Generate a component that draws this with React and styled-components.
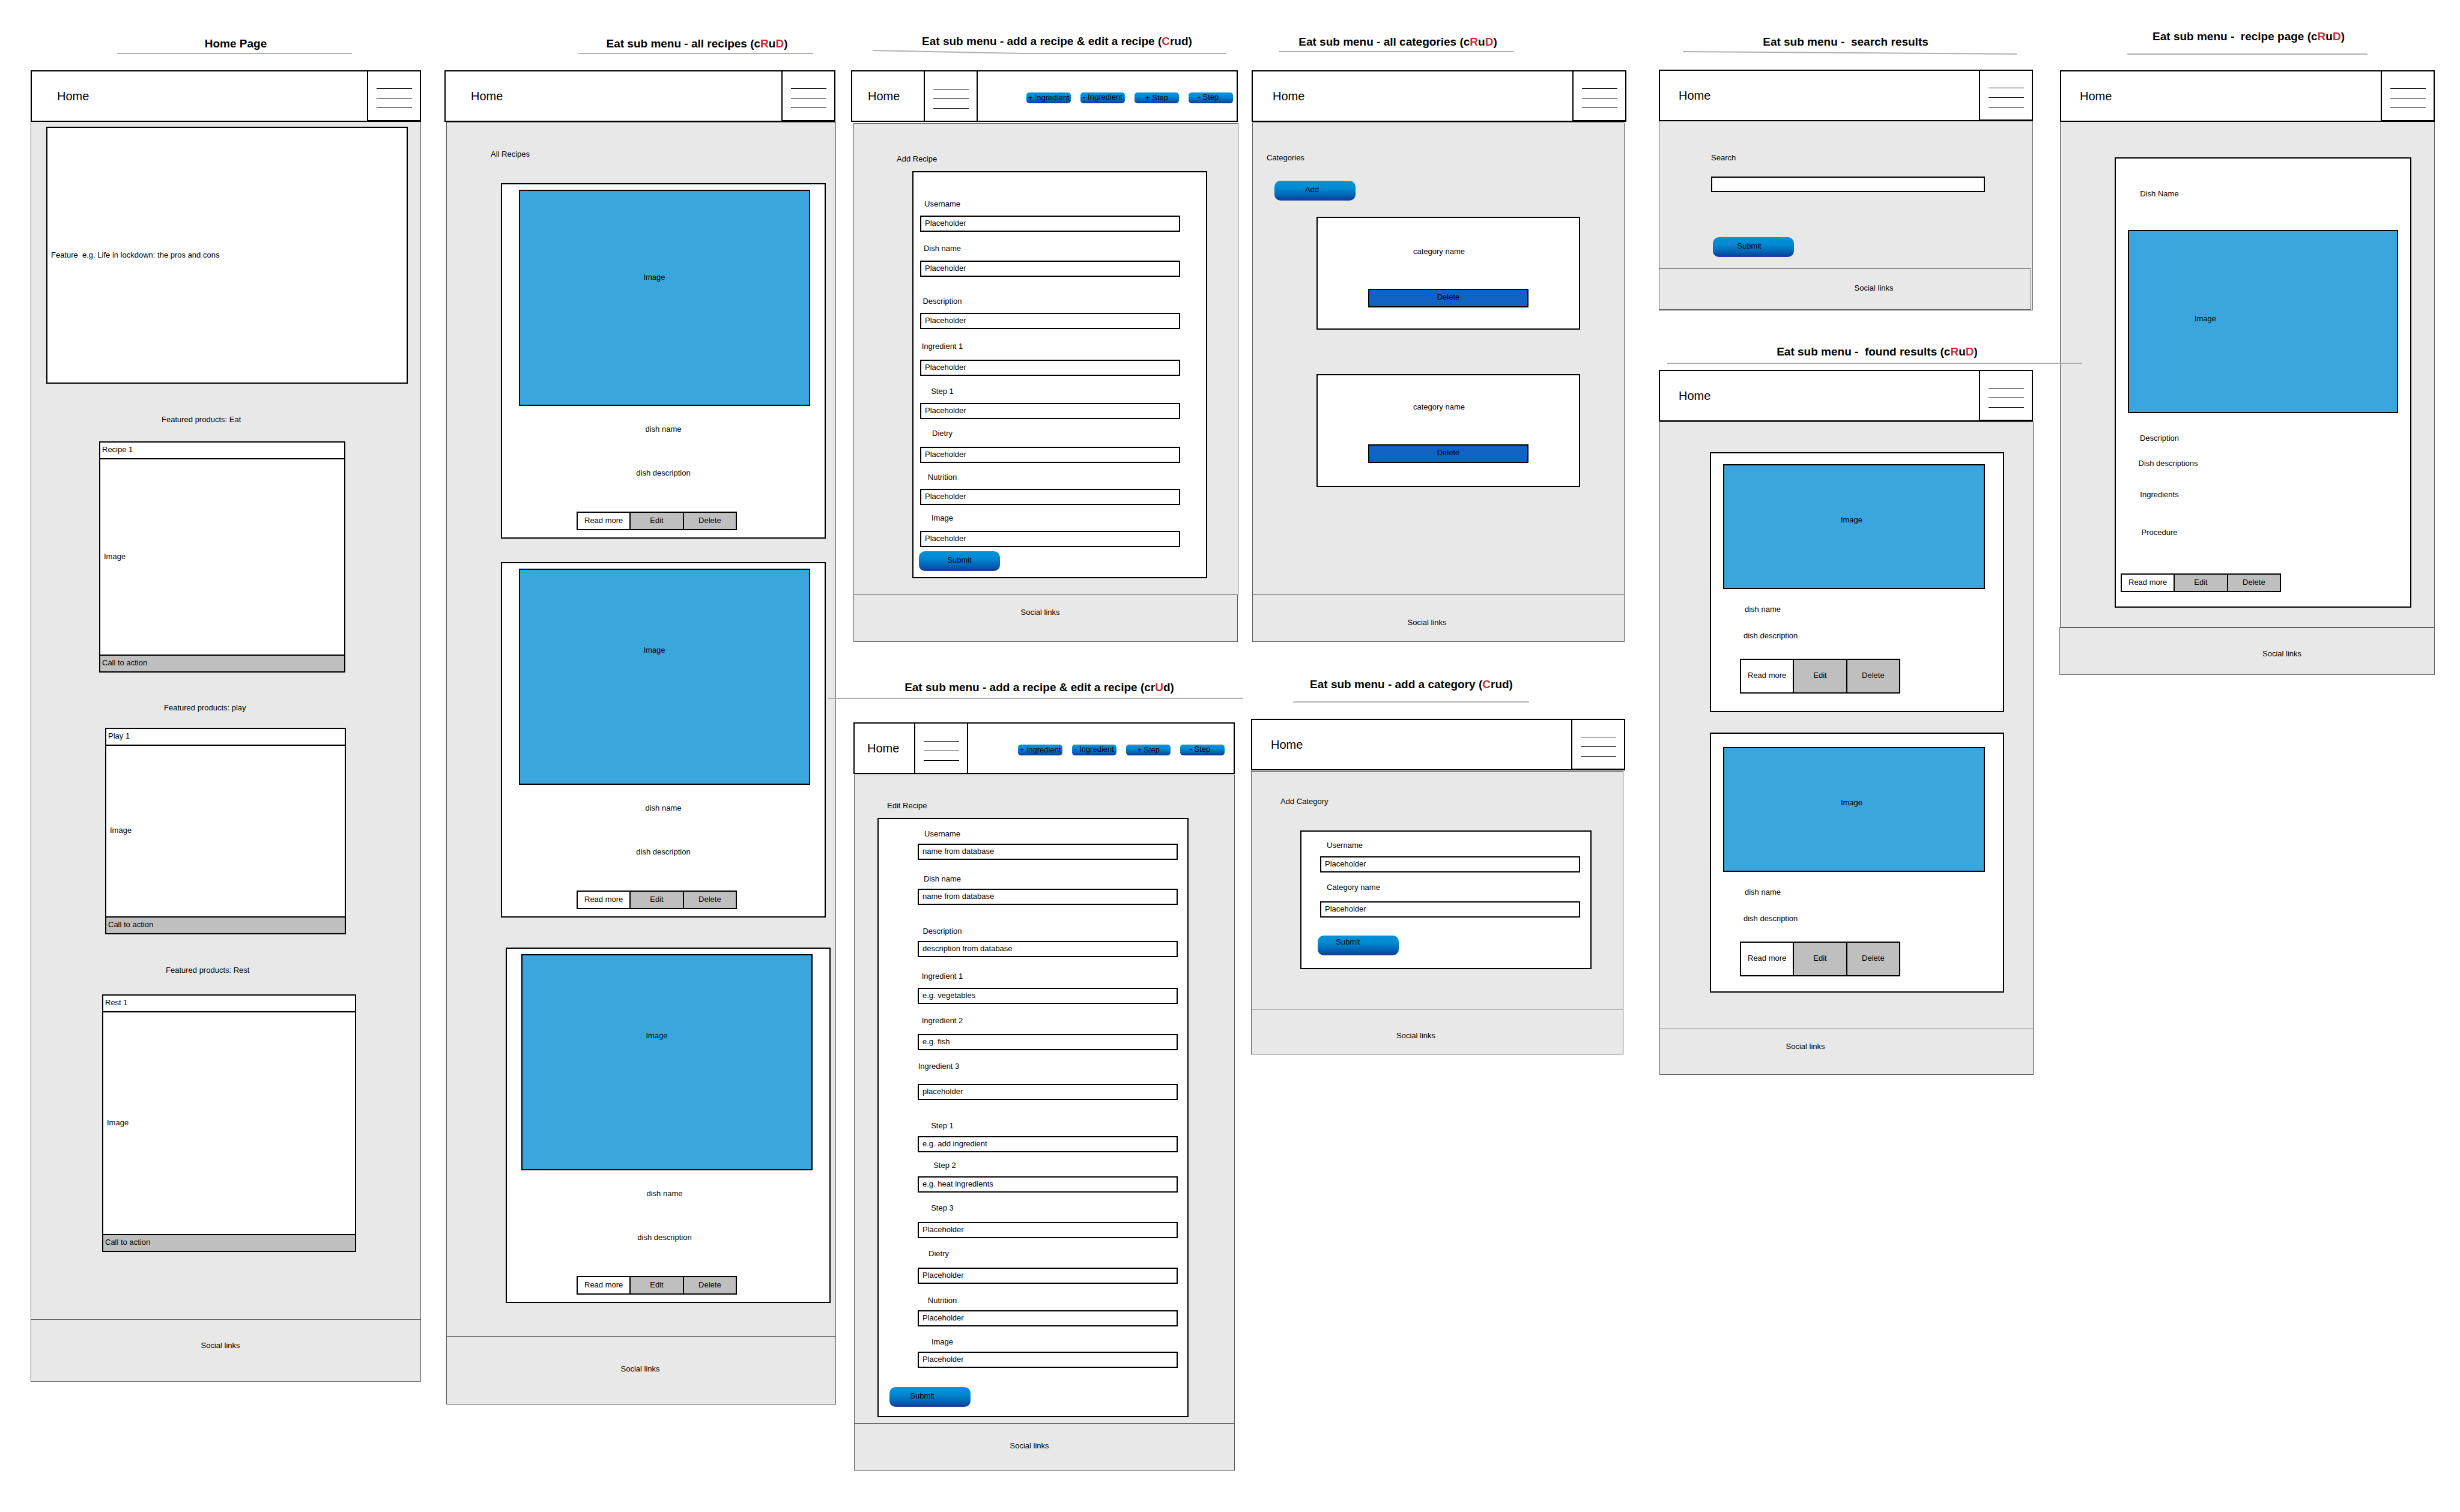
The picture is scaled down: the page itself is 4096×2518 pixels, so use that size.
import React, { useId } from 'react';
import styled, { createGlobalStyle, css } from 'styled-components';

const ink = '#000000';
const hairline = '#5e5e5e';
const panel = '#e8e8e8';
const photo = '#3ba5de';
const muted = '#bfbfbf';
const accent = '#c92c38';

const GlobalStyle = createGlobalStyle`
  *, *::before, *::after { box-sizing: border-box; }
  body {
    margin: 0;
    background: #ffffff;
    color: ${ink};
    font-family: "Liberation Sans", Arial, Helvetica, sans-serif;
    font-size: 13px;
    line-height: 16px;
  }
  button, input { font: inherit; color: inherit; margin: 0; }
`;

/* Outer spacing shared by every block that sits in a column. */
const spacing = css`
  margin-top: ${(p) => p.$mt || 0}px;
  margin-left: ${(p) => p.$ml || 0}px;
  margin-right: ${(p) => p.$mr || 0}px;
`;

const Board = styled.main`
  display: grid;
  grid-template-columns:
    51fr minmax(0, 650fr) 39fr minmax(0, 652fr) 25fr minmax(0, 645fr) 21fr
    minmax(0, 626fr) 53fr minmax(0, 624fr) 44fr minmax(0, 624fr) 42fr;
  align-items: start;
  padding-bottom: 60px;
`;

const Column = styled.div`
  grid-column: ${(p) => p.$track * 2};
  display: flex;
  flex-direction: column;
  padding-top: ${(p) => p.$pt}px;
`;

const Artboard = styled.section`
  display: flex;
  flex-direction: column;
  margin-top: ${(p) => p.$mt || 0}px;
`;

const Title = styled.h2`
  margin: 0;
  padding-left: ${(p) => p.$pl || 0}px;
  padding-right: ${(p) => p.$pr || 0}px;
  font-size: 19px;
  line-height: 24px;
  font-weight: 700;
  text-align: center;
  white-space: pre;
`;

const Hot = styled.span`
  color: ${accent};
`;

const Rule = styled.hr`
  ${spacing}
  position: relative;
  z-index: 1;
  height: 0;
  margin-bottom: 0;
  border: 0;
  border-top: 2px solid #b0b0b0;
`;

const SlopedFrame = styled.div`
  ${spacing}
  height: 8px;
  svg { display: block; width: 100%; height: 100%; overflow: visible; }
`;

const Header = styled.header`
  ${spacing}
  display: flex;
  align-items: stretch;
  height: 86px;
  border: 2px solid ${ink};
  background: #ffffff;
`;

const HomeLink = styled.a`
  display: flex;
  align-items: center;
  flex: ${(p) => (p.$width ? `0 0 ${p.$width}px` : '1 1 auto')};
  padding-left: ${(p) => p.$pl}px;
  color: inherit;
  font-size: 20px;
  line-height: 24px;
  text-decoration: none;
`;

const MenuButton = styled.button`
  display: flex;
  flex: 0 0 ${(p) => (p.$boxed ? 90 : 88)}px;
  flex-direction: column;
  align-items: center;
  justify-content: center;
  gap: 15px;
  padding: 8px 0 0;
  border: 0 solid ${ink};
  border-left-width: 2px;
  border-right-width: ${(p) => (p.$boxed ? 2 : 0)}px;
  border-bottom-width: ${(p) => (p.$boxed ? 0 : 1)}px;
  background: transparent;
`;

const Bar = styled.span`
  width: 59px;
  height: 1px;
  background: #000000;
`;

const Toolbar = styled.div`
  display: flex;
  flex: 1 1 auto;
  align-items: center;
  justify-content: flex-end;
  gap: 16px;
  padding: 6px ${(p) => p.$pr}px 0 0;
`;

const GlossyButton = styled.button`
  ${spacing}
  flex: none;
  align-self: ${(p) => (p.$small ? 'center' : 'flex-start')};
  width: ${(p) => (p.$small ? 74 : 135)}px;
  height: ${(p) => (p.$small ? 18 : 33)}px;
  padding: 0 ${(p) => p.$pr || 0}px ${(p) => p.$pb || 0}px 0;
  border: 0;
  border-radius: ${(p) => (p.$small ? 5 : 10)}px;
  background: linear-gradient(#0093db 0%, #008ad2 35%, #0065b4 72%, #0a479f 92%, #2c3c98 100%);
  line-height: 16px;
  white-space: nowrap;
`;

const Body = styled.div`
  ${spacing}
  display: flex;
  flex-direction: column;
  padding-bottom: ${(p) => p.$pb || 0}px;
  border: 1px solid ${hairline};
  border-top-width: ${(p) => (p.$topLine ? 1 : 0)}px;
  border-bottom-width: ${(p) => (p.$bottomLine ? 1 : 0)}px;
  background: ${panel};
`;

const Footer = styled.footer`
  ${spacing}
  height: ${(p) => p.$height}px;
  padding: ${(p) => p.$pt}px ${(p) => p.$pr || 0}px 0 ${(p) => p.$pl || 0}px;
  border: 1px solid ${hairline};
  background: ${panel};
  text-align: center;
  a { color: inherit; text-decoration: none; }
`;

const Text = styled.p`
  margin: ${(p) => p.$mt || 0}px 0 0;
  padding-left: ${(p) => p.$pl || 0}px;
  padding-right: ${(p) => p.$pr || 0}px;
  width: ${(p) => (p.$width ? `${p.$width}px` : 'auto')};
  text-align: ${(p) => (p.$center ? 'center' : 'left')};
  white-space: pre;
`;

const Card = styled.article`
  ${spacing}
  display: flex;
  flex-direction: column;
  height: ${(p) => (p.$height ? `${p.$height}px` : 'auto')};
  padding-bottom: ${(p) => p.$pb || 0}px;
  border: 2px solid ${ink};
  background: #ffffff;
`;

const Form = styled(Card).attrs({ as: 'form' })``;

const FeatureBox = styled(Card)`
  justify-content: center;
`;

const CardStrip = styled.div`
  height: 28px;
  padding: 4px 3px 0;
  border: 0 solid ${ink};
  border-bottom-width: 2px;
`;

const CardFrame = styled.div`
  display: flex;
  align-items: center;
  height: ${(p) => p.$height}px;
  padding: 0 6px 2px;
`;

const CallToAction = styled.button`
  display: block;
  height: 28px;
  padding: 2px 3px 4px;
  border: 0;
  border-top: 2px solid ${ink};
  background: ${muted};
  text-align: left;
`;

const Photo = styled.div`
  ${spacing}
  height: ${(p) => p.$height}px;
  padding: ${(p) => p.$pt}px ${(p) => p.$pr || 0}px 0 0;
  border: 2px solid ${ink};
  background: ${photo};
  text-align: center;
`;

const ButtonGroup = styled.div`
  ${spacing}
  display: flex;
  width: 267px;
  height: ${(p) => (p.$tall ? 58 : 31)}px;
  border: 2px solid ${ink};
`;

const GroupButton = styled.button`
  flex: 1 1 0;
  padding: 0 0 2px;
  border: 0 solid ${ink};
  border-left-width: ${(p) => (p.$first ? 0 : 2)}px;
  background: ${(p) => (p.$first ? '#ffffff' : muted)};
  white-space: nowrap;
`;

const DeleteButton = styled.button`
  ${spacing}
  height: 31px;
  padding: 0 0 3px;
  border: 2px solid ${ink};
  background: #1063c2;
`;

const FieldBox = styled.div`
  ${spacing}
  display: flex;
  flex-direction: column;
  align-items: flex-start;
  gap: ${(p) => p.$gap}px;
`;

const Label = styled.label`
  width: ${(p) => (p.$width ? `${p.$width}px` : 'auto')};
  padding-left: ${(p) => p.$pl || 0}px;
  text-align: center;
  white-space: nowrap;
`;

const Input = styled.input`
  width: 100%;
  height: ${(p) => p.$height || 27}px;
  padding: 0 6px 2px;
  border: 2px solid ${ink};
  border-radius: 0;
  background: #ffffff;
  outline: none;
  &::placeholder { color: ${ink}; opacity: 1; }
`;

function PageHeader({ pl = 33, ...box }) {
  return (
    <Header {...box}>
      <HomeLink href="#home" $pl={pl}>Home</HomeLink>
      <Menu />
    </Header>
  );
}

function Menu({ boxed }) {
  return (
    <MenuButton type="button" aria-label="Menu" $boxed={boxed}>
      <Bar /><Bar /><Bar />
    </MenuButton>
  );
}

function EditorHeader({ homeWidth, pl, toolbarPad, ...box }) {
  return (
    <Header {...box}>
      <HomeLink href="#home" $width={homeWidth} $pl={pl}>Home</HomeLink>
      <Menu boxed />
      <Toolbar $pr={toolbarPad}>
        <GlossyButton type="button" $small>+ Ingredient</GlossyButton>
        <GlossyButton type="button" $small $pb={2}>- Ingredient</GlossyButton>
        <GlossyButton type="button" $small>+ Step</GlossyButton>
        <GlossyButton type="button" $small $pb={2} $pr={8}>- Step</GlossyButton>
      </Toolbar>
    </Header>
  );
}

function SocialFooter(props) {
  return (
    <Footer {...props}>
      <a href="#social">Social links</a>
    </Footer>
  );
}

function SlopedRule({ points, ...box }) {
  return (
    <SlopedFrame {...box}>
      <svg viewBox="0 0 100 8" preserveAspectRatio="none" aria-hidden="true">
        <polyline points={points} fill="none" stroke="#b0b0b0" strokeWidth="2" vectorEffect="non-scaling-stroke" />
      </svg>
    </SlopedFrame>
  );
}

function CrudRD() {
  return <>(c<Hot>R</Hot>u<Hot>D</Hot>)</>;
}

function Field({ label, gap, width, labelPad, value, placeholder, height, ...box }) {
  const id = useId();
  return (
    <FieldBox {...box} $gap={gap}>
      <Label htmlFor={id} $width={width} $pl={labelPad}>{label}</Label>
      <Input id={id} type="text" defaultValue={value} placeholder={placeholder} $height={height} />
    </FieldBox>
  );
}

function Actions(props) {
  return (
    <ButtonGroup {...props}>
      <GroupButton type="button" $first>Read more</GroupButton>
      <GroupButton type="button">Edit</GroupButton>
      <GroupButton type="button">Delete</GroupButton>
    </ButtonGroup>
  );
}

function ProductCard({ name, frame, ...box }) {
  return (
    <Card {...box}>
      <CardStrip>{name}</CardStrip>
      <CardFrame $height={frame}>Image</CardFrame>
      <CallToAction type="button">Call to action</CallToAction>
    </Card>
  );
}

function RecipeCard({ captionTop, actionsLeft, textPad, photoLeft = 28, photoRight = 24, ...box }) {
  return (
    <Card {...box} $pb={12}>
      <Photo $mt={9} $ml={photoLeft} $mr={photoRight} $height={360} $pt={captionTop} $pr={34}>Image</Photo>
      <Text $mt={31} $center $pr={textPad}>dish name</Text>
      <Text $mt={57} $center $pr={textPad}>dish description</Text>
      <Actions $mt={56} $ml={actionsLeft} />
    </Card>
  );
}

function ResultCard({ photoTop, ...box }) {
  return (
    <Card {...box} $height={433}>
      <Photo $mt={photoTop} $ml={20} $mr={30} $height={208} $pt={83} $pr={8}>Image</Photo>
      <Text $mt={26} $pl={56}>dish name</Text>
      <Text $mt={28} $pl={54}>dish description</Text>
      <Actions $mt={30} $ml={48} $tall />
    </Card>
  );
}

function CategoryCard({ top, ...box }) {
  return (
    <Card {...box} $height={188}>
      <Text $mt={top} $center $pr={31}>category name</Text>
      <DeleteButton type="button" $mt={54} $ml={84} $mr={84}>Delete</DeleteButton>
    </Card>
  );
}

const addFields = [
  { label: 'Username', $mt: 45, gap: 11 },
  { label: 'Dish name', $mt: 20, gap: 12 },
  { label: 'Description', $mt: 33, gap: 11 },
  { label: 'Ingredient 1', $mt: 21, gap: 14 },
  { label: 'Step 1', $mt: 18, gap: 11 },
  { label: 'Dietry', $mt: 16, gap: 14 },
  { label: 'Nutrition', $mt: 16, gap: 11 },
  { label: 'Image', $mt: 14, gap: 13 },
];

const editFields = [
  { label: 'Username', value: 'name from database', $mt: 17, gap: 8 },
  { label: 'Dish name', value: 'name from database', $mt: 24, gap: 8 },
  { label: 'Description', value: 'description from database', $mt: 36, gap: 8 },
  { label: 'Ingredient 1', placeholder: 'e.g. vegetables', $mt: 24, gap: 11 },
  { label: 'Ingredient 2', placeholder: 'e.g. fish', $mt: 20, gap: 14 },
  { label: 'Ingredient 3', placeholder: 'placeholder', $mt: 19, gap: 21, width: 70 },
  { label: 'Step 1', placeholder: 'e.g. add ingredient', $mt: 35, gap: 9 },
  { label: 'Step 2', placeholder: 'e.g. heat ingredients', $mt: 14, gap: 10, width: 90 },
  { label: 'Step 3', placeholder: 'Placeholder', $mt: 18, gap: 15 },
  { label: 'Dietry', placeholder: 'Placeholder', $mt: 18, gap: 15, width: 70 },
  { label: 'Nutrition', placeholder: 'Placeholder', $mt: 20, gap: 8 },
  { label: 'Image', placeholder: 'Placeholder', $mt: 18, gap: 8 },
];

export default function App() {
  return (
    <>
      <GlobalStyle />
      <Board>
        <Column $track={1} $pt={61}>
          <Artboard>
            <Title $pl={33}>Home Page</Title>
            <Rule $mt={3} $ml={144} $mr={115} />
            <PageHeader $mt={27} pl={42} />
            <Body $pb={112}>
              <FeatureBox $mt={8} $ml={25} $mr={21} $height={428}>
                <Text $pl={6}>{'Feature  e.g. Life in lockdown: the pros and cons'}</Text>
              </FeatureBox>
              <Text $mt={52} $pl={217}>Featured products: Eat</Text>
              <ProductCard name="Recipe 1" frame={325} $mt={28} $ml={113} $mr={125} />
              <Text $mt={51} $pl={221}>Featured products: play</Text>
              <ProductCard name="Play 1" frame={284} $mt={25} $ml={123} $mr={124} />
              <Text $mt={52} $pl={224}>Featured products: Rest</Text>
              <ProductCard name="Rest 1" frame={369} $mt={32} $ml={118} $mr={107} />
            </Body>
            <SocialFooter $height={104} $pt={35} $pr={18} />
          </Artboard>
        </Column>

        <Column $track={2} $pt={61}>
          <Artboard>
            <Title $pl={189}>Eat sub menu - all recipes <CrudRD /></Title>
            <Rule $mt={3} $ml={223} $mr={38} />
            <PageHeader $mt={27} $mr={1} pl={42} />
            <Body $ml={3} $topLine $pb={55}>
              <Text $mt={45} $pl={73}>All Recipes</Text>
              <RecipeCard $mt={40} $ml={90} $mr={16} captionTop={136} actionsLeft={124} />
              <RecipeCard $mt={39} $ml={90} $mr={16} captionTop={126} actionsLeft={124} />
              <RecipeCard $mt={50} $ml={98} $mr={8} captionTop={126} actionsLeft={116} textPad={12} photoLeft={24} photoRight={28} />
            </Body>
            <SocialFooter $ml={3} $height={114} $pt={46} $pr={3} />
          </Artboard>
        </Column>

        <Column $track={3} $pt={57}>
          <Artboard>
            <Title $pl={41}>Eat sub menu - add a recipe &amp; edit a recipe (<Hot>C</Hot>rud)</Title>
            <SlopedRule points="0,2 42,7 100,7" $mt={1} $ml={36} $mr={21} />
            <EditorHeader $mt={27} $mr={1} homeWidth={119} pl={26} toolbarPad={6} />
            <Body $mt={2} $ml={4} $topLine $pb={27}>
              <Text $mt={51} $pl={71}>Add Recipe</Text>
              <Form $mt={12} $ml={97} $mr={51} $pb={10}>
                {addFields.map((f) => (
                  <Field key={f.label} placeholder="Placeholder" width={74} $ml={11} $mr={43} {...f} />
                ))}
                <GlossyButton type="button" $mt={7} $ml={9} $pb={4}>Submit</GlossyButton>
              </Form>
            </Body>
            <SocialFooter $ml={4} $mr={1} $height={79} $pt={21} $pr={18} />
          </Artboard>
          <Artboard $mt={64}>
            <Title $pr={18}>Eat sub menu - add a recipe &amp; edit a recipe (cr<Hot>U</Hot>d)</Title>
            <Rule $mt={5} $ml={-38} $mr={-8} />
            <EditorHeader $mt={39} $ml={4} $mr={6} homeWidth={99} pl={21} toolbarPad={15} />
            <Body $mt={1} $ml={5} $mr={6} $topLine $pb={10}>
              <Text $mt={43} $pl={54}>Edit Recipe</Text>
              <Form $mt={12} $ml={38} $mr={76} $pb={15}>
                {editFields.map((f) => (
                  <Field key={f.label} width={82} $ml={65} $mr={16} {...f} />
                ))}
                <GlossyButton type="button" $mt={32} $ml={18} $pr={26} $pb={4}>Submit</GlossyButton>
              </Form>
            </Body>
            <SocialFooter $ml={5} $mr={6} $height={79} $pt={29} $pr={50} />
          </Artboard>
        </Column>

        <Column $track={4} $pt={58}>
          <Artboard>
            <Title $pr={137}>Eat sub menu - all categories <CrudRD /></Title>
            <Rule $mt={3} $ml={46} $mr={189} />
            <PageHeader $mt={30} $ml={1} $mr={1} />
            <Body $mt={1} $ml={2} $mr={4} $topLine $pb={179}>
              <Text $mt={50} $pl={23}>Categories</Text>
              <GlossyButton type="button" $mt={30} $ml={36} $pr={10} $pb={4}>Add</GlossyButton>
              <CategoryCard $mt={27} $ml={106} $mr={73} top={48} />
              <CategoryCard $mt={74} $ml={106} $mr={73} top={45} />
            </Body>
            <SocialFooter $ml={2} $mr={4} $height={79} $pt={38} $pr={38} />
          </Artboard>
          <Artboard $mt={59}>
            <Title $pr={92}>Eat sub menu - add a category (<Hot>C</Hot>rud)</Title>
            <Rule $mt={16} $ml={70} $mr={163} />
            <PageHeader $mt={27} $mr={3} pl={31} />
            <Body $mt={1} $mr={6} $topLine $pb={66}>
              <Text $mt={42} $pl={48}>Add Category</Text>
              <Form $mt={40} $ml={81} $mr={52} $pb={21}>
                <Field label="Username" placeholder="Placeholder" labelPad={11} gap={10} $mt={15} $ml={31} $mr={17} />
                <Field label="Category name" placeholder="Placeholder" labelPad={11} gap={15} $mt={17} $ml={31} $mr={17} />
                <GlossyButton type="button" $mt={30} $ml={27} $pr={34} $pb={12}>Submit</GlossyButton>
              </Form>
            </Body>
            <SocialFooter $mr={6} $height={76} $pt={36} $pr={71} />
          </Artboard>
        </Column>

        <Column $track={5} $pt={58}>
          <Artboard>
            <Title $pr={2}>{'Eat sub menu -  search results'}</Title>
            <SlopedRule points="0,3 100,7" $mt={1} $ml={40} $mr={28} />
            <PageHeader $mt={25} $mr={1} pl={31} />
            <Body $mr={1} $bottomLine>
              <Field label="Search" labelPad={0} gap={23} height={26} $mt={53} $ml={86} $mr={79} />
              <GlossyButton type="button" $mt={75} $ml={89} $pr={14} $pb={4}>Submit</GlossyButton>
              <SocialFooter $mt={19} $ml={-1} $mr={2} $height={69} $pt={24} $pl={96} />
            </Body>
          </Artboard>
          <Artboard $mt={57}>
            <Title $pl={103}>{'Eat sub menu -  found results '}<CrudRD /></Title>
            <Rule $mt={6} $ml={14} $mr={-81} />
            <PageHeader $mt={10} $mr={1} pl={31} />
            <Body $ml={1} $topLine $pb={60}>
              <ResultCard $mt={50} $ml={83} $mr={48} photoTop={18} />
              <ResultCard $mt={34} $ml={83} $mr={48} photoTop={22} />
            </Body>
            <SocialFooter $ml={1} $height={77} $pt={21} $pr={137} />
          </Artboard>
        </Column>

        <Column $track={6} $pt={49}>
          <Artboard>
            <Title $pl={4}>{'Eat sub menu -  recipe page '}<CrudRD /></Title>
            <Rule $mt={16} $ml={112} $mr={112} />
            <PageHeader $mt={26} pl={31} />
            <Body $bottomLine $pb={32}>
              <Card $mt={59} $ml={90} $mr={38} $pb={24}>
                <Text $mt={51} $width={145} $center>Dish Name</Text>
                <Photo $mt={52} $ml={20} $mr={20} $height={305} $pt={138} $pr={192}>Image</Photo>
                <Text $mt={34} $width={145} $center>Description</Text>
                <Text $mt={26} $width={174} $center>Dish descriptions</Text>
                <Text $mt={36} $width={145} $center>Ingredients</Text>
                <Text $mt={47} $width={145} $center>Procedure</Text>
                <Actions $mt={60} $ml={8} />
              </Card>
            </Body>
            <SocialFooter $ml={-1} $height={79} $pt={35} $pl={116} />
          </Artboard>
        </Column>
      </Board>
    </>
  );
}
